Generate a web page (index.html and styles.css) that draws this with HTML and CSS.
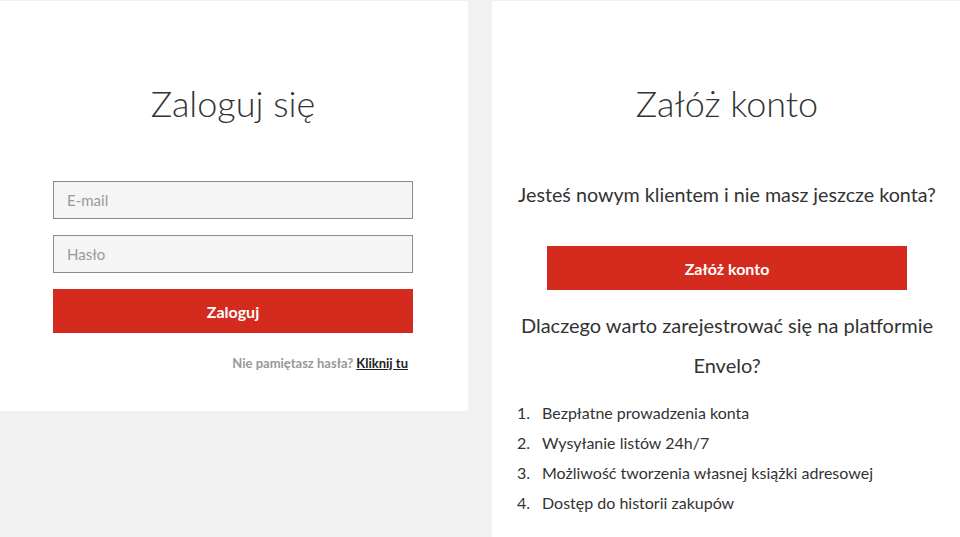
FILE: index.html
```html
<!DOCTYPE html>
<html lang="pl">
<head>
    <meta charset="utf-8">
    <title>Logowanie</title>
    <link rel="stylesheet" href="styles.css">
</head>
<body>
    <div class="page">
        <div class="panel login">
            <h2>Zaloguj się</h2>
            <form class="login-form">
                <input type="text" placeholder="E-mail">
                <input type="password" placeholder="Hasło">
                <button type="button" class="btn">Zaloguj</button>
            </form>
            <p class="forgot">Nie pamiętasz hasła? <a href="#">Kliknij tu</a></p>
        </div>

        <div class="panel register">
            <h2>Załóż konto</h2>
            <p class="lead">Jesteś nowym klientem i nie masz jeszcze konta?</p>
            <button type="button" class="btn">Załóż konto</button>
            <h3>Dlaczego warto zarejestrować się na platformie Envelo?</h3>
            <ol class="benefits">
                <li>Bezpłatne prowadzenia konta</li>
                <li>Wysyłanie listów 24h/7</li>
                <li>Możliwość tworzenia własnej książki adresowej</li>
                <li>Dostęp do historii zakupów</li>
            </ol>
        </div>
    </div>
</body>
</html>
```

FILE: styles.css
```css
body { margin: 0; background: #f1f1f1; font-family: Lato, "Open Sans", sans-serif; color: #333; }
.page { display: grid; grid-template-columns: 468px 468px; column-gap: 24px; align-items: start; padding-top: 1px; min-height: 536px; }
.panel { background: #fff; padding: 80px 24px 0; }
.login { height: 330px; padding-left: 23px; padding-right: 25px; }
.register { min-height: 456px; padding-left: 25px; padding-right: 23px; }
h2 { margin: 0; font-size: 36px; font-weight: 300; line-height: 44px; text-align: center; color: #333; }
.login-form { width: 360px; margin: 56px auto 0; display: flex; flex-direction: column; }
input { height: 38px; box-sizing: border-box; margin-bottom: 16px; padding: 0 13px; border: 1px solid #8c8c8c; background: #f5f5f5; font-family: Lato, sans-serif; font-size: 15px; color: #333; }
input::placeholder { color: #9a9a9a; }
.btn { display: block; width: 360px; height: 44px; margin: 0 auto; border: none; background: #d52b1e; color: #fff; font-family: Lato, sans-serif; font-size: 16px; font-weight: 700; cursor: pointer; }
.forgot { width: 360px; margin: 20px auto 0; padding-right: 5px; box-sizing: border-box; text-align: right; font-size: 13px; font-weight: 700; color: #999; line-height: 20px; }
.forgot a { color: #222; text-decoration: underline; }
.lead { margin: 56px 0 37px; font-size: 19.7px; line-height: 28px; text-align: center; }
h3 { margin: 15px 0 13px; font-size: 20px; font-weight: 400; line-height: 40px; text-align: center; }
.benefits { margin: 0; padding-left: 0; list-style: none; counter-reset: item; font-size: 16px; line-height: 30px; }
.benefits li { counter-increment: item; display: flex; }
.benefits li::before { content: counter(item) "."; width: 25px; flex: none; }
```
